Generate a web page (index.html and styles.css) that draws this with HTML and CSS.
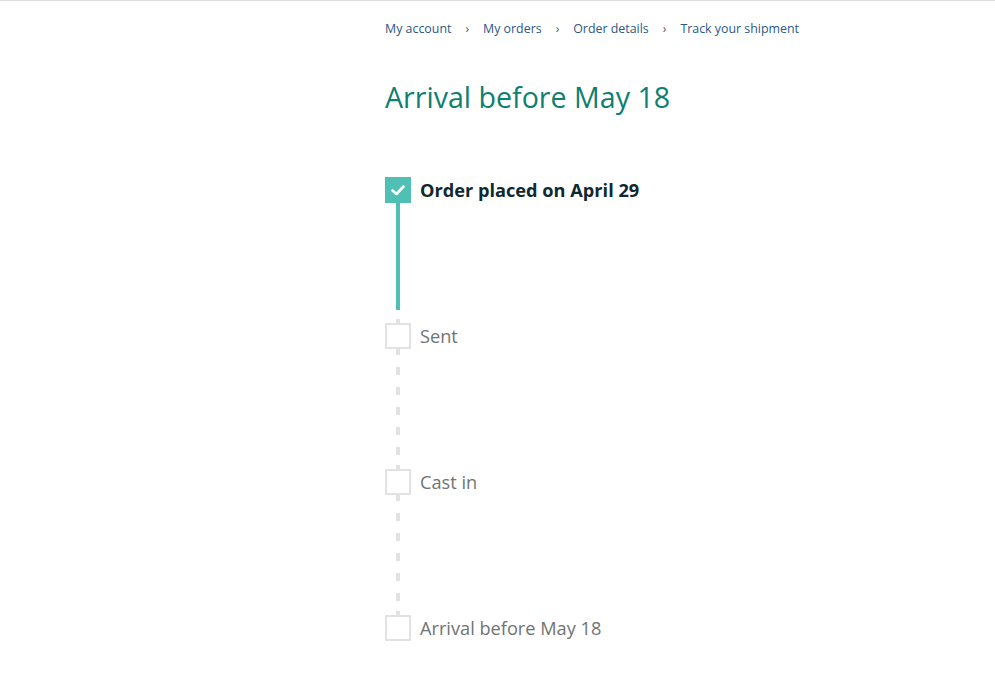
FILE: index.html
```html
<!DOCTYPE html>
<html lang="en">
<head>
    <meta charset="UTF-8">
    <meta name="viewport" content="width=device-width, initial-scale=1.0">
    <title>Track your shipment</title>
    <link rel="stylesheet" href="styles.css">
</head>
<body>
    <div class="page">
        <div class="side"></div>
        <div class="main">
            <nav class="breadcrumb">
                <a href="#">My account</a>
                <span class="sep">›</span>
                <a href="#">My orders</a>
                <span class="sep">›</span>
                <a href="#">Order details</a>
                <span class="sep">›</span>
                <a href="#">Track your shipment</a>
            </nav>

            <h1 class="title">Arrival before May 18</h1>

            <ul class="tracker">
                <li class="step done">
                    <div class="marker">
                        <span class="box">
                            <svg width="16" height="16" viewBox="0 0 16 16"><polyline points="2.5,8.5 6.5,12 13.5,4.5" fill="none" stroke="#fff" stroke-width="2.6" stroke-linecap="round" stroke-linejoin="round"/></svg>
                        </span>
                        <span class="line line-done"></span>
                    </div>
                    <span class="label">Order placed on April 29</span>
                </li>
                <li class="step">
                    <div class="marker">
                        <span class="box"></span>
                        <span class="line"></span>
                    </div>
                    <span class="label">Sent</span>
                </li>
                <li class="step">
                    <div class="marker">
                        <span class="box"></span>
                        <span class="line"></span>
                    </div>
                    <span class="label">Cast in</span>
                </li>
                <li class="step last">
                    <div class="marker">
                        <span class="box"></span>
                    </div>
                    <span class="label">Arrival before May 18</span>
                </li>
            </ul>
        </div>
    </div>
</body>
</html>
```

FILE: styles.css
```css
* {
    margin: 0;
    padding: 0;
    box-sizing: border-box;
}

body {
    background-color: white;
    font-family: "Open Sans", Arial, sans-serif;
    border-top: 1px solid #dddddd;
}

.page {
    display: grid;
    grid-template-columns: 385px 1fr;
}

.main {
    padding-top: 19px;
}

.breadcrumb {
    display: flex;
    gap: 14px;
    font-size: 12.4px;
    line-height: 18px;
}

.breadcrumb a {
    color: #2a5888;
    text-decoration: none;
}

.breadcrumb .sep {
    color: #555;
    font-size: 12px;
}

.title {
    margin-top: 40px;
    font-size: 28.6px;
    font-weight: normal;
    color: #0e7f70;
    line-height: 38px;
}

.tracker {
    list-style: none;
    margin-top: 61px;
}

.step {
    display: flex;
    gap: 9px;
    height: 146px;
}

.step.last {
    height: auto;
}

.marker {
    width: 26px;
    display: flex;
    flex-direction: column;
    align-items: center;
}

.box {
    width: 26px;
    height: 26px;
    border: 2.5px solid #e2e2e2;
    display: flex;
    align-items: center;
    justify-content: center;
    position: relative;
}

.box::before {
    content: "";
    position: absolute;
    top: -6.5px;
    left: 8.5px;
    width: 4px;
    height: 4px;
    background-color: #e2e2e2;
}

.done .box {
    background-color: #4fc0b3;
    border-color: #4fc0b3;
}

.done .box::before {
    display: none;
}

.line {
    width: 4px;
    flex: 1;
    background: repeating-linear-gradient(to bottom, #e2e2e2 0 6px, transparent 6px 18px, #e2e2e2 18px 20px);
}

.line-done {
    background: linear-gradient(to bottom, #4fc0b3 0 107px, transparent 107px);
}

.label {
    font-size: 18.2px;
    line-height: 26px;
    color: #6f7474;
}

.done .label {
    color: #10282f;
    font-weight: bold;
}
```
